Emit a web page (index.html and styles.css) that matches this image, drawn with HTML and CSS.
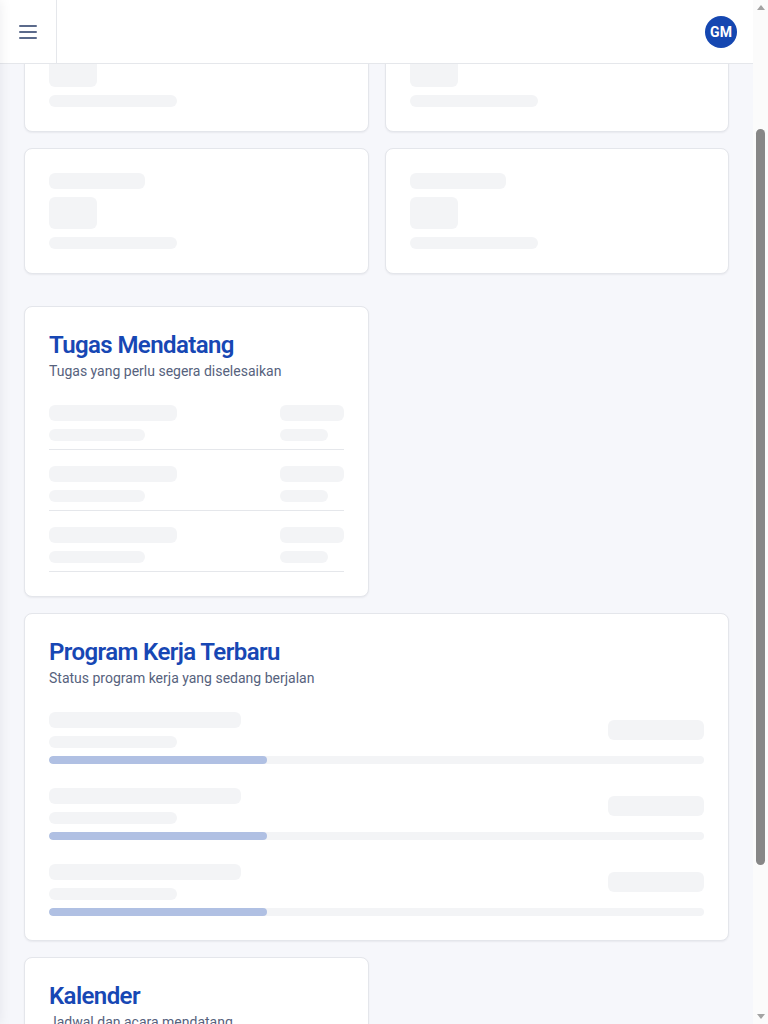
FILE: index.html
```html
<!DOCTYPE html>
<html lang="id">
<head>
<meta charset="utf-8">
<title>Dashboard</title>
<link rel="stylesheet" href="styles.css">
</head>
<body>
<aside class="sidebar" aria-hidden="true"></aside>
<div class="app" id="app">
<header class="topbar">
  <button class="menu-btn" aria-label="Menu">
    <svg width="24" height="24" viewBox="0 0 24 24" fill="none" stroke="currentColor" stroke-width="2" stroke-linecap="round" stroke-linejoin="round"><path d="M4 6h16"/><path d="M4 12h16"/><path d="M4 18h16"/></svg>
  </button>
  <div class="topbar-spacer"></div>
  <div class="avatar">GM</div>
</header>

<main class="main">
  <div class="page-head">
    <div class="sk head-sk-a"></div>
    <div class="sk head-sk-b"></div>
  </div>

  <section class="stats" id="stats">
    <div class="card stat"><div class="sk sk-a"></div><div class="sk sk-b"></div><div class="sk sk-c"></div></div>
    <div class="card stat"><div class="sk sk-a"></div><div class="sk sk-b"></div><div class="sk sk-c"></div></div>
    <div class="card stat"><div class="sk sk-a"></div><div class="sk sk-b"></div><div class="sk sk-c"></div></div>
    <div class="card stat"><div class="sk sk-a"></div><div class="sk sk-b"></div><div class="sk sk-c"></div></div>
  </section>

  <section class="panels">
    <div class="card">
      <div class="card-head">
        <h3 class="card-title">Tugas Mendatang</h3>
        <p class="card-desc">Tugas yang perlu segera diselesaikan</p>
      </div>
      <div class="card-body task-list">
        <div class="task">
          <div class="task-col"><div class="sk w128 h16"></div><div class="sk w96 h12"></div></div>
          <div class="task-col"><div class="sk w64 h16"></div><div class="sk w48 h12"></div></div>
        </div>
        <div class="task">
          <div class="task-col"><div class="sk w128 h16"></div><div class="sk w96 h12"></div></div>
          <div class="task-col"><div class="sk w64 h16"></div><div class="sk w48 h12"></div></div>
        </div>
        <div class="task">
          <div class="task-col"><div class="sk w128 h16"></div><div class="sk w96 h12"></div></div>
          <div class="task-col"><div class="sk w64 h16"></div><div class="sk w48 h12"></div></div>
        </div>
      </div>
    </div>

    <div class="card span-2">
      <div class="card-head">
        <h3 class="card-title">Program Kerja Terbaru</h3>
        <p class="card-desc">Status program kerja yang sedang berjalan</p>
      </div>
      <div class="card-body prog-list">
        <div class="prog">
          <div class="prog-top">
            <div class="task-col"><div class="sk w192 h16"></div><div class="sk w128 h12"></div></div>
            <div class="sk w96 h20"></div>
          </div>
          <div class="bar"><div class="bar-fill" style="width:33.3%"></div></div>
        </div>
        <div class="prog">
          <div class="prog-top">
            <div class="task-col"><div class="sk w192 h16"></div><div class="sk w128 h12"></div></div>
            <div class="sk w96 h20"></div>
          </div>
          <div class="bar"><div class="bar-fill" style="width:33.3%"></div></div>
        </div>
        <div class="prog">
          <div class="prog-top">
            <div class="task-col"><div class="sk w192 h16"></div><div class="sk w128 h12"></div></div>
            <div class="sk w96 h20"></div>
          </div>
          <div class="bar"><div class="bar-fill" style="width:33.3%"></div></div>
        </div>
      </div>
    </div>

    <div class="card">
      <div class="card-head">
        <h3 class="card-title">Kalender</h3>
        <p class="card-desc">Jadwal dan acara mendatang</p>
      </div>
      <div class="card-body">
        <div class="sk cal-sk"></div>
      </div>
    </div>
  </section>
</main>
</div>
<div class="vscroll" aria-hidden="true">
  <div class="vscroll-btn"><span class="arrow-up"></span></div>
  <div class="vscroll-track"><div class="vscroll-thumb" id="thumb"></div></div>
  <div class="vscroll-btn"><span class="arrow-down"></span></div>
</div>
<script src="script.js"></script>
</body>
</html>
```
FILE: styles.css
```css
* { box-sizing: border-box; }
html, body { margin: 0; padding: 0; height: 100%; overflow: hidden; }
body {
  display: flex;
  background: #f6f7fb;
  font-family: Roboto, "Noto Sans", Arial, sans-serif;
  color: #1f2937;
}

.app {
  flex: 1;
  min-width: 0;
  height: 100vh;
  overflow-y: scroll;
  scrollbar-width: none;
  background: #f6f7fb;
}
.app::-webkit-scrollbar { display: none; width: 0; }

/* scrollbar column */
.vscroll {
  width: 15px;
  flex: 0 0 15px;
  height: 100vh;
  background: #fbfbfb;
  display: flex;
  flex-direction: column;
}
.vscroll-btn {
  height: 15px;
  flex: 0 0 15px;
  display: flex;
  align-items: center;
  justify-content: center;
}
.arrow-up {
  width: 0; height: 0;
  border-left: 4.5px solid transparent;
  border-right: 4.5px solid transparent;
  border-bottom: 5px solid #a3a3a3;
}
.arrow-down {
  width: 0; height: 0;
  border-left: 4.5px solid transparent;
  border-right: 4.5px solid transparent;
  border-top: 5px solid #a3a3a3;
}
.vscroll-track {
  flex: 1;
  display: flex;
  flex-direction: column;
  align-items: center;
}
.vscroll-thumb {
  width: 9px;
  height: 737px;
  margin-top: 113px;
  background: #878787;
  border-radius: 5px;
}

.sidebar {
  position: fixed;
  top: 0;
  bottom: 0;
  left: 0;
  width: 256px;
  background: #fff;
  transform: translateX(-100%);
  box-shadow: 0 0 12px rgba(15, 23, 42, 0.08);
  z-index: 30;
}

.topbar {
  position: sticky;
  top: 0;
  z-index: 20;
  height: 64px;
  background: #fff;
  border-bottom: 1px solid #e5e7eb;
  display: flex;
  align-items: center;
}
.menu-btn {
  width: 57px;
  height: 63px;
  border: 0;
  border-right: 1px solid #e5e7eb;
  background: transparent;
  color: #5b6a8b;
  display: flex;
  align-items: center;
  justify-content: center;
  padding: 0 1px 0 0;
  cursor: pointer;
}
.menu-btn svg { display: block; }
.topbar-spacer { flex: 1; }
.avatar {
  width: 32px;
  height: 32px;
  border-radius: 50%;
  background: #1547b1;
  color: #fff;
  font-size: 14px;
  font-weight: 700;
  display: flex;
  align-items: center;
  justify-content: center;
  margin-right: 16px;
}

.main { padding: 24px; }

.page-head {
  margin-bottom: 16px;
  display: flex;
  flex-direction: column;
  align-items: flex-start;
  gap: 8px;
}
.head-sk-a { width: 192px; height: 32px; }
.head-sk-b { width: 256px; height: 20px; }

.stats {
  display: grid;
  grid-template-columns: 1fr 1fr;
  gap: 16px;
}
.panels {
  display: grid;
  grid-template-columns: 1fr 1fr;
  gap: 16px;
  margin-top: 32px;
  align-items: start;
}
.span-2 { grid-column: span 2; }

.card {
  background: #fff;
  border: 1px solid #e4e6eb;
  border-radius: 8px;
  box-shadow: 0 1px 2px rgba(15, 23, 42, 0.06);
}

.stat {
  padding: 24px;
  display: flex;
  flex-direction: column;
  align-items: flex-start;
  gap: 8px;
}

.sk { background: #f3f4f6; border-radius: 6px; }
.sk-a { width: 96px; height: 16px; }
.sk-b { width: 48px; height: 32px; }
.sk-c { width: 128px; height: 12px; }
.w48 { width: 48px; } .w64 { width: 64px; } .w96 { width: 96px; }
.w128 { width: 128px; } .w192 { width: 192px; }
.h12 { height: 12px; } .h16 { height: 16px; } .h20 { height: 20px; }

.card-head { padding: 24px; }
.card-title {
  margin: 0;
  padding-top: 2px;
  font-size: 24px;
  line-height: 24px;
  font-weight: 600;
  letter-spacing: -0.025em;
  color: #1747b4;
}
.card-desc {
  margin: 4px 0 0;
  font-size: 14px;
  line-height: 20px;
  color: #56627d;
}
.card-body { padding: 0 24px 24px; }

.task-list { display: flex; flex-direction: column; gap: 16px; }
.task {
  display: flex;
  justify-content: space-between;
  padding-bottom: 8px;
  border-bottom: 1px solid #e5e7eb;
}
.task-col { display: flex; flex-direction: column; align-items: flex-start; gap: 8px; }

.prog-list { display: flex; flex-direction: column; gap: 24px; }
.prog-top { display: flex; justify-content: space-between; align-items: center; }
.bar {
  margin-top: 8px;
  height: 8px;
  border-radius: 9999px;
  background: #f3f4f6;
  overflow: hidden;
}
.bar-fill { height: 100%; background: #b0c0e3; border-radius: 9999px; }

.cal-sk { height: 120px; width: 100%; }
```
FILE: script.js
```js
(function () {
  function place() {
    var app = document.getElementById('app');
    var stats = document.getElementById('stats');
    var offset = stats.getBoundingClientRect().top - app.getBoundingClientRect().top + app.scrollTop;
    app.scrollTop = offset - 6;

    var thumb = document.getElementById('thumb');
    var track = thumb.parentNode.clientHeight;
    var ratio = app.clientHeight / app.scrollHeight;
    thumb.style.height = Math.round(track * ratio) + 'px';
    thumb.style.marginTop = Math.round(track * app.scrollTop / app.scrollHeight) + 'px';
  }
  place();
  window.addEventListener('load', place);
})();
```
